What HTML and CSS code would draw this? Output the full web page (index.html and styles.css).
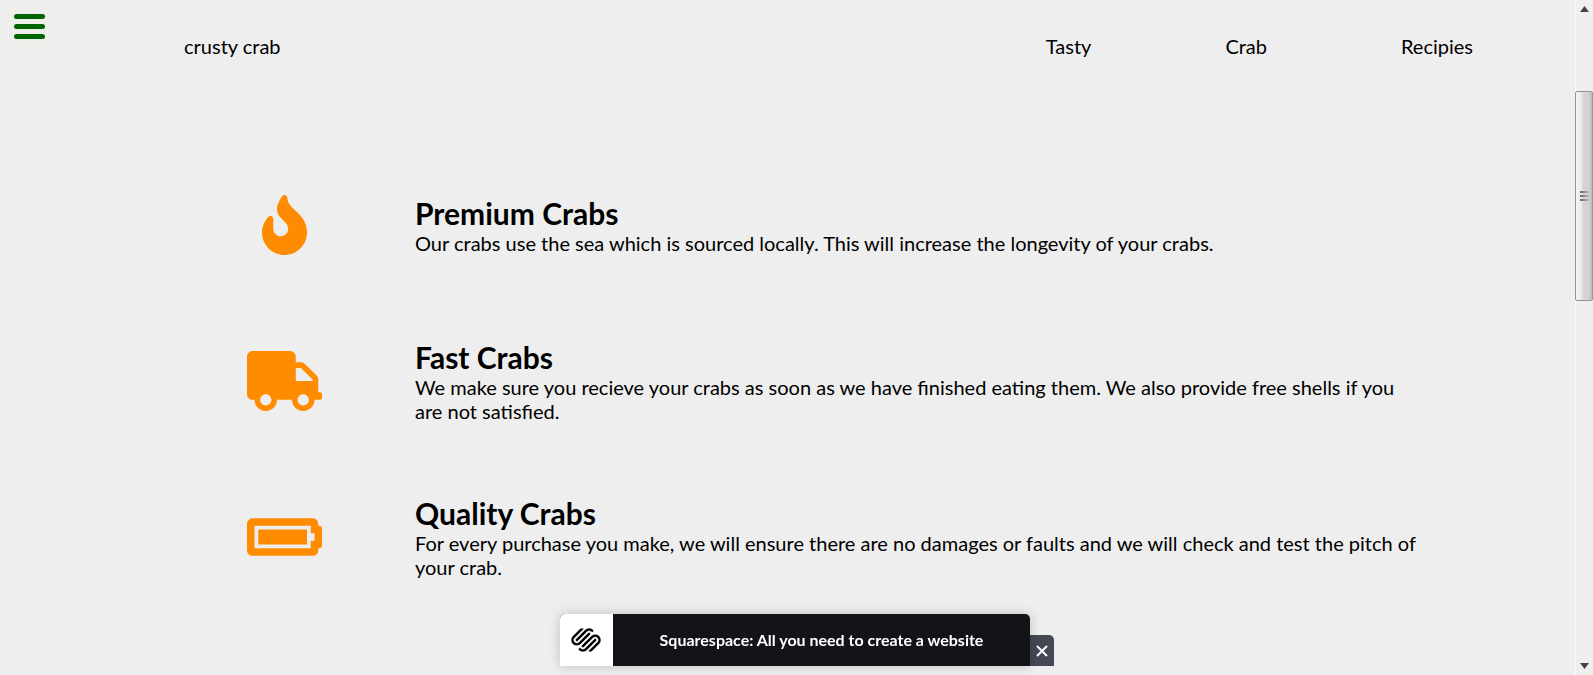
FILE: index.html
```
<!DOCTYPE html>
<html lang="en">
<head>
<meta charset="utf-8">
<title>crusty crab</title>
<link rel="stylesheet" href="styles.css">
</head>
<body>
<div class="page">
  <header class="header">
    <div class="brand">crusty crab</div>
    <nav class="nav">
      <a href="#tasty">Tasty</a>
      <a href="#crab">Crab</a>
      <a href="#recipies">Recipies</a>
    </nav>
  </header>
  <main class="features">
    <section class="feature">
      <svg class="icon" viewBox="0 0 384 512" aria-hidden="true"><path d="M216 23.86c0-23.8-30.65-32.77-44.15-13.04C48 191.85 224 200 224 288c0 35.63-29.11 64.46-64.85 63.99-35.17-.45-63.15-29.77-63.15-64.94v-85.51c0-21.7-26.47-32.23-41.43-16.5C27.8 213.16 0 261.33 0 320c0 105.87 86.13 192 192 192s192-86.13 192-192c0-170.29-168-193-168-296.14z"/></svg>
      <div class="copy">
        <h2>Premium Crabs</h2>
        <p>Our crabs use the sea which is sourced locally. This will increase the longevity of your crabs.</p>
      </div>
    </section>
    <section class="feature">
      <svg class="icon" viewBox="0 0 640 512" aria-hidden="true"><path d="M624 352h-16V243.900c0-12.700-5.100-24.900-14.100-33.900L494 110.100c-9-9-21.200-14.100-33.900-14.100H416V48c0-26.500-21.500-48-48-48H48C21.500 0 0 21.500 0 48v320c0 26.500 21.500 48 48 48h16c0 53 43 96 96 96s96-43 96-96h128c0 53 43 96 96 96s96-43 96-96h48c8.800 0 16-7.200 16-16v-32c0-8.800-7.200-16-16-16zM160 464c-26.500 0-48-21.500-48-48s21.500-48 48-48 48 21.500 48 48-21.500 48-48 48zm320 0c-26.500 0-48-21.500-48-48s21.500-48 48-48 48 21.500 48 48-21.500 48-48 48zm80-208H416V144h44.100l99.900 99.900V256z"/></svg>
      <div class="copy">
        <h2>Fast Crabs</h2>
        <p>We make sure you recieve your crabs as soon as we have finished eating them. We also provide free shells if you are not satisfied.</p>
      </div>
    </section>
    <section class="feature">
      <svg class="icon" viewBox="0 0 640 512" aria-hidden="true"><path d="M544 160v64h32v64h-32v64H64V160h480m16-64H48c-26.510 0-48 21.490-48 48v224c0 26.510 21.490 48 48 48h512c26.510 0 48-21.490 48-48v-16h8c13.255 0 24-10.745 24-24V184c0-13.255-10.745-24-24-24h-8v-16c0-26.510-21.490-48-48-48zm-48 96H96v128h416V192z"/></svg>
      <div class="copy">
        <h2>Quality Crabs</h2>
        <p>For every purchase you make, we will ensure there are no damages or faults and we will check and test the pitch of your crab.</p>
      </div>
    </section>
  </main>
</div>

<div class="scrollbar" aria-hidden="true">
  <svg class="arrow" viewBox="0 0 9 6"><path d="M4.500 0L9 6H0z"/></svg>
  <div class="track">
    <div class="thumb"><i></i><i></i><i></i></div>
  </div>
  <svg class="arrow" viewBox="0 0 9 6"><path d="M0 0h9L4.500 6z"/></svg>
</div>

<button class="menu" type="button" aria-label="Menu"><span></span><span></span><span></span></button>

<aside class="banner">
  <a class="ad" href="#squarespace">
    <span class="logo">
      <svg viewBox="0 0 24 24" aria-hidden="true"><path d="M22.655 8.719c-1.802-1.801-4.726-1.801-6.564 0l-7.351 7.350c-.450.450-.450 1.200 0 1.650.450.449 1.200.449 1.650 0l7.351-7.351c.899-.899 2.362-.899 3.264 0 .900.900.900 2.364 0 3.264l-7.239 7.239c.900.899 2.362.899 3.263 0l5.589-5.589c1.836-1.838 1.836-4.763.037-6.563zm-2.475 2.437c-.451-.450-1.201-.450-1.650 0l-7.354 7.389c-.900.899-2.361.899-3.262 0-.450-.450-1.200-.450-1.650 0s-.450 1.200 0 1.649c1.801 1.801 4.726 1.801 6.564 0l7.351-7.350c.449-.487.449-1.239.001-1.688zm-2.439-7.350c-1.801-1.801-4.726-1.801-6.564 0l-7.351 7.351c-.450.449-.450 1.199 0 1.649s1.200.450 1.650 0l7.395-7.351c.900-.899 2.371-.899 3.270 0 .451.450 1.201.450 1.650 0 .421-.487.421-1.199-.050-1.649zm-2.475 2.475c-.450-.449-1.200-.449-1.650 0l-7.351 7.351c-.899.900-2.361.900-3.263 0-.900-.900-.900-2.363 0-3.264l7.239-7.239c-.900-.900-2.362-.900-3.263 0L1.350 8.719c-1.800 1.800-1.800 4.763 0 6.563 1.801 1.801 4.726 1.801 6.564 0l7.351-7.351c.451-.488.451-1.238 0-1.650z"/></svg>
    </span>
    <span class="message">Squarespace: All you need to create a website</span>
  </a>
  <button class="close" type="button" aria-label="Close"><svg viewBox="0 0 12 12" aria-hidden="true"><path d="M1 1l10 10M11 1L1 11"/></svg></button>
</aside>
</body>
</html>
```
FILE: styles.css
```
* {
  box-sizing: border-box;
  margin: 0;
  padding: 0;
}

body {
  display: flex;
  min-height: 100vh;
  background: #eee;
  color: #000;
  font: 20px/24px Lato, sans-serif;
}

.page {
  flex: 1;
  min-width: 0;
}

.header {
  display: flex;
  justify-content: space-between;
  padding: 34px 102px 0 184px;
}

.nav {
  display: flex;
  gap: 134px;
}

.nav a {
  color: inherit;
  text-decoration: none;
}

.features {
  display: flex;
  flex-direction: column;
  gap: 72px;
  padding: 125px 155px 72px 153px;
}

.feature {
  display: grid;
  grid-template-columns: 262px 1fr;
  align-items: center;
  min-height: 84px;
}

.icon {
  justify-self: center;
  height: 60px;
  fill: #ff8c00;
}

h2 {
  font-size: 30px;
  line-height: 36px;
}

.scrollbar {
  position: sticky;
  top: 0;
  display: flex;
  flex-direction: column;
  align-items: center;
  width: 18px;
  height: 100vh;
  padding: 6px 0;
  border-left: 1px solid #fafafa;
  background: #efefef;
}

.arrow {
  width: 9px;
  height: 6px;
  fill: #444;
}

.track {
  flex: 1;
  align-self: stretch;
  padding-top: 79px;
}

.thumb {
  display: flex;
  flex-direction: column;
  align-items: center;
  justify-content: center;
  gap: 2px;
  height: 32%;
  min-height: 210px;
  margin-left: -1px;
  border: 1px solid #959595;
  border-radius: 2px;
  background: linear-gradient(90deg, #f6f6f6, #e9e9eb 35%, #d4d4d7 45%, #d4d4d7 80%, #bbb);
}

.thumb i {
  width: 9px;
  height: 2px;
  background: linear-gradient(90deg, #666, #bbb);
}

.menu {
  position: fixed;
  top: 8px;
  left: 5px;
  display: flex;
  flex-direction: column;
  align-items: center;
  justify-content: center;
  gap: 5px;
  width: 48px;
  height: 37px;
  border: 0;
  background: #eeeeea;
}

.menu span {
  width: 31px;
  height: 5px;
  border-radius: 3px;
  background: #060;
}

.banner {
  position: fixed;
  right: 0;
  bottom: 9px;
  left: 21px;
  display: flex;
  align-items: flex-end;
  justify-content: center;
  pointer-events: none;
}

.ad,
.close {
  pointer-events: auto;
}

.ad {
  position: relative;
  z-index: 1;
  display: flex;
  width: 470px;
  height: 52px;
  overflow: hidden;
  border-radius: 5px 5px 0 0;
  background: #121418;
  box-shadow: 0 0 12px rgba(0, 0, 0, 0.2);
  color: #fff;
  font-size: 16px;
  font-weight: 700;
  text-decoration: none;
}

.logo {
  display: grid;
  place-items: center;
  width: 53px;
  padding-right: 2px;
  background: #fff;
}

.logo svg {
  width: 30px;
  height: 30px;
  stroke: #fff;
  stroke-width: 0.5;
}

.message {
  flex: 1;
  align-self: center;
  text-align: center;
}

.close {
  display: grid;
  place-items: center;
  width: 24px;
  height: 31px;
  border: 0;
  border-radius: 0 5px 0 0;
  background: #444855;
}

.close svg {
  width: 12px;
  height: 12px;
  stroke: #fff;
  stroke-width: 2;
}
```
